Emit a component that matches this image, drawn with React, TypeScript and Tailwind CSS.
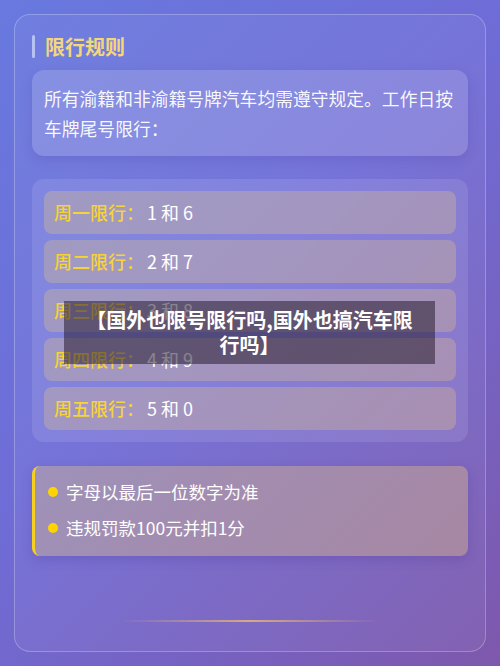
import React from "react";

const rules = [
  { day: "周一限行：", nums: "1 和 6" },
  { day: "周二限行：", nums: "2 和 7" },
  { day: "周三限行：", nums: "3 和 8" },
  { day: "周四限行：", nums: "4 和 9" },
  { day: "周五限行：", nums: "5 和 0" },
];

export default function App() {
  return (
    <div
      className="relative w-[500px] h-[666px] overflow-hidden bg-[linear-gradient(135deg,#6879df_0%,#6f6cd6_45%,#7e58ac_100%)] p-[14px]"
      style={{ fontFamily: '"Noto Sans CJK SC", "Noto Sans", sans-serif' }}
    >
      <div className="rounded-2xl border border-white/25 bg-white/5 px-[17px] pt-[20px] pb-[29px]">
        <div className="flex items-center h-[23px]">
          <div className="w-[3px] h-[23px] rounded-sm bg-[#b6c2f4]" />
          <div className="ml-[10px] text-[20px] leading-[23px] font-bold text-[#f3d77b]">限行规则</div>
        </div>

        <div className="mt-[12px] rounded-xl bg-white/15 shadow-[0_4px_12px_rgba(60,40,140,0.15)] px-[12px] py-[13px] text-[17.8px] leading-[30px] text-white/95">
          所有渝籍和非渝籍号牌汽车均需遵守规定。工作日按车牌尾号限行：
        </div>

        <div className="mt-[23px] rounded-xl bg-white/10 p-[12px] flex flex-col gap-[6px]">
          {rules.map((r) => (
            <div
              key={r.day}
              className="h-[43px] rounded-lg bg-[#ffd670]/25 px-[10px] flex items-center text-[18px]"
            >
              <span className="text-[#f6d336] font-medium">{r.day}</span>
              <span className="ml-[3px] text-white">{r.nums}</span>
            </div>
          ))}
        </div>

        <div className="mt-[24px] rounded-lg border-l-[3px] border-[#f5d020] bg-[#ffd670]/30 shadow-[0_4px_12px_rgba(60,40,140,0.2)] pl-[13px] pt-[8px] pb-[10px] text-[17.5px] leading-[36px] text-white">
          <div className="flex items-center">
            <span className="w-[10px] h-[10px] rounded-full bg-[#ffd400]" />
            <span className="ml-[8px]">字母以最后一位数字为准</span>
          </div>
          <div className="flex items-center">
            <span className="w-[10px] h-[10px] rounded-full bg-[#ffd400]" />
            <span className="ml-[8px]">违规罚款100元并扣1分</span>
          </div>
        </div>

        <div className="mt-[64px] mx-auto w-[260px] h-[2px] bg-[linear-gradient(90deg,rgba(230,180,120,0)_0%,rgba(230,180,120,0.85)_50%,rgba(230,180,120,0)_100%)]" />
      </div>

      <div className="absolute left-[64px] top-[301px] w-[371px] h-[63px] bg-[rgba(40,30,50,0.55)] px-[18px] py-[6px] text-center text-white font-bold text-[20px] leading-[25px]">
        【国外也限号限行吗,国外也搞汽车限行吗】
      </div>
    </div>
  );
}
